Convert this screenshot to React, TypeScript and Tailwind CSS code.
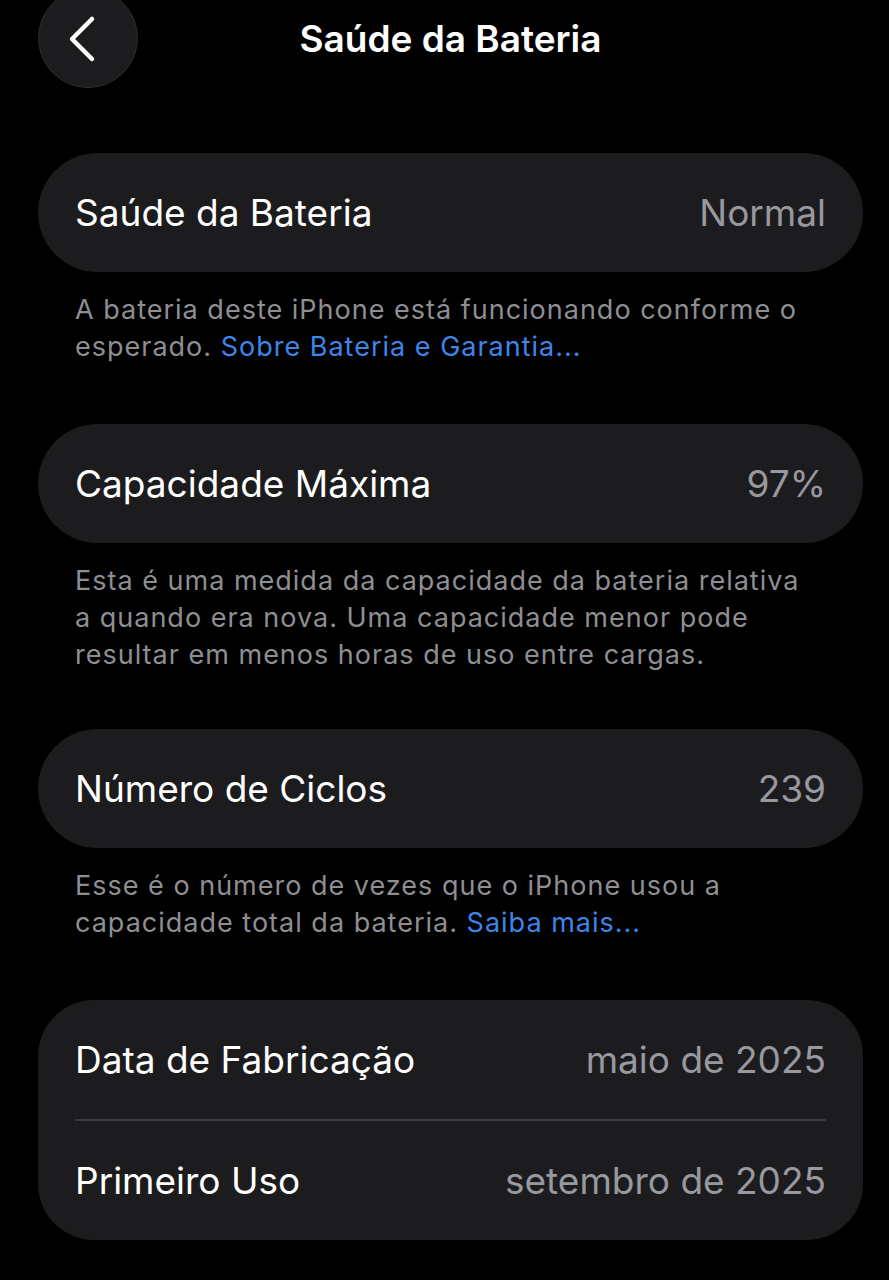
const font = { fontFamily: 'Inter, "Noto Sans", sans-serif' };

const Row = ({ label, value }: { label: string; value: string }) => (
  <div className="flex items-center justify-between h-[119px] px-[37px]">
    <span className="text-[37px] text-white">{label}</span>
    <span className="text-[37px] text-[#98989f]">{value}</span>
  </div>
);

const Card = ({ children }: { children: React.ReactNode }) => (
  <div className="bg-[#1c1c1e] rounded-[60px] ml-[38px] mr-[26px]">{children}</div>
);

const Caption = ({ children }: { children: React.ReactNode }) => (
  <p className="ml-[75px] mr-[70px] mt-[19px] text-[27px] leading-[37px] tracking-[1px] text-[#8e8e93]">{children}</p>
);

const App = () => {
  return (
    <div className="bg-black min-h-screen w-[889px] overflow-hidden" style={font}>
      <div className="grid grid-cols-[1fr_auto_1fr] items-center h-[88px] pl-[38px] pr-[26px]">
        <div className="-mt-[12px]">
          <div className="w-[100px] h-[100px] rounded-full bg-[#1c1c1e] border border-[#2c2c2e] flex items-center justify-center">
            <svg width="34" height="48" viewBox="0 0 34 48" className="-ml-[10px] mt-[2px]" fill="none">
              <polyline points="26,4 6,24 26,44" stroke="white" strokeWidth="4.5" strokeLinecap="round" strokeLinejoin="round" />
            </svg>
          </div>
        </div>
        <h1 className="text-[37px] font-semibold text-white -mt-[10px]">Saúde da Bateria</h1>
        <div />
      </div>

      <div className="pt-[65px]">
        <Card>
          <Row label="Saúde da Bateria" value="Normal" />
        </Card>
        <Caption>
          A bateria deste iPhone está funcionando conforme o esperado.{' '}
          <span className="text-[#3d86e8]">Sobre Bateria e Garantia...</span>
        </Caption>

        <div className="mt-[59px]">
          <Card>
            <Row label="Capacidade Máxima" value="97%" />
          </Card>
        </div>
        <Caption>
          Esta é uma medida da capacidade da bateria relativa a quando era nova. Uma capacidade menor pode
          resultar em menos horas de uso entre cargas.
        </Caption>

        <div className="mt-[56px]">
          <Card>
            <Row label="Número de Ciclos" value="239" />
          </Card>
        </div>
        <Caption>
          Esse é o número de vezes que o iPhone usou a capacidade total da bateria.{' '}
          <span className="text-[#3d86e8]">Saiba mais...</span>
        </Caption>

        <div className="mt-[59px]">
          <div className="bg-[#1c1c1e] rounded-[56px] ml-[38px] mr-[26px]">
            <Row label="Data de Fabricação" value="maio de 2025" />
            <div className="mx-[37px] h-[2px] bg-[#38383a]" />
            <Row label="Primeiro Uso" value="setembro de 2025" />
          </div>
        </div>
      </div>
    </div>
  );
};

export default App;
